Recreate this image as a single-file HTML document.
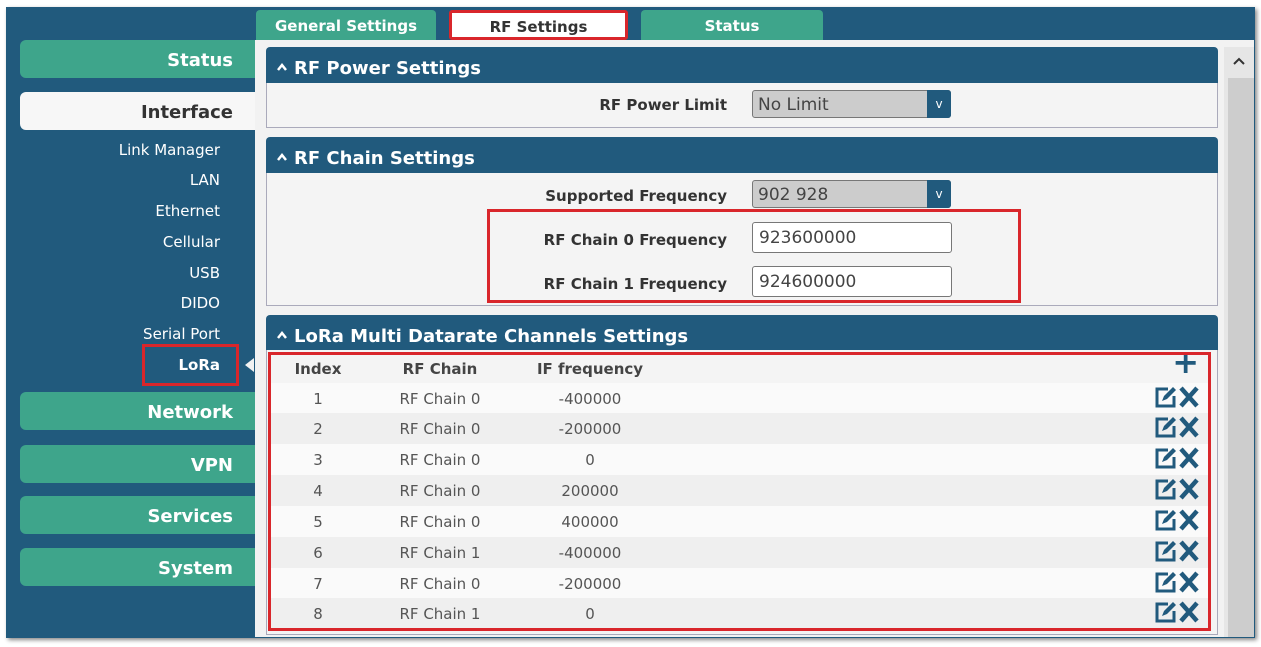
<!DOCTYPE html>
<html><head><style>
*{margin:0;padding:0;box-sizing:border-box}
body{width:1261px;height:647px;background:#fff;font-family:"DejaVu Sans","Liberation Sans",sans-serif;position:relative;overflow:hidden}
.a{position:absolute}
.frame{left:6px;top:7px;width:1249px;height:631px;background:#215a7d;box-shadow:2px 2px 4px #888}
.nav{left:20px;width:235px;height:38px;background:#3ea58b;border-radius:6px 0 0 6px;color:#fff;font-weight:bold;font-size:18px;text-align:right;padding-right:22px;line-height:42px}
.sub{right:1041px;color:#fff;font-size:15px;text-align:right}
.tab{top:10px;height:30px;background:#3ea58b;color:#fff;font-weight:bold;font-size:15px;text-align:center;line-height:33px;border-radius:4px 4px 0 0}
.content{left:255px;top:40px;width:999px;height:597px;background:#f2f2f2}
.ph{left:266px;width:952px;height:36px;background:#215a7d;color:#fff;font-weight:bold;font-size:18px;line-height:42px;padding-left:10px;border-radius:4px 4px 0 0}
.ph b{display:inline-block;width:12px;height:12px;vertical-align:1px;margin-right:6px}
.pb{left:266px;width:952px;background:#f4f4f4;border:1px solid #aab;border-top:none}
.lbl{font-weight:bold;font-size:15px;color:#333;text-align:right;width:300px;left:427px}
.sel{left:752px;width:199px;height:28px;border:1px solid #777;border-radius:3px;background:#ccc;font-size:17px;color:#444;padding-left:5px;line-height:28px}
.sel i{position:absolute;right:-1px;top:-1px;width:24px;height:28px;background:#215a7d;color:#fff;font-style:normal;font-size:12px;text-align:center;line-height:28px;border-radius:0 3px 3px 0}
.inp{left:752px;width:200px;height:31px;border:1px solid #777;border-radius:3px;background:#fff;font-size:17px;color:#444;padding-left:6px;line-height:31px}
.red{border:3px solid #d9262b}
.row{left:270px;width:938px;height:31px;font-size:15px;color:#555}
.row span{position:absolute;top:7px;text-align:center}
.c1{left:18px;width:60px}.c2{left:110px;width:120px}.c3{left:250px;width:140px}
.ic{position:absolute;right:8px;top:2px!important}
</style></head><body>
<div class="a frame"></div>
<div class="a content"></div>
<div class="a" style="left:1224px;top:47px;width:30px;height:590px;background:#e6e6e6"></div>
<div class="a" style="left:1228px;top:78px;width:26px;height:559px;background:#cdcdcd"></div>
<svg class="a" style="left:1232px;top:56px" width="14" height="10"><path d="M2 8l5-5 5 5" fill="none" stroke="#333" stroke-width="2"/></svg>

<div class="a nav" style="top:40px">Status</div>
<div class="a nav" style="top:92px;background:#f7f7f7;color:#333">Interface</div>
<div class="a sub" style="top:141px">Link Manager</div>
<div class="a sub" style="top:171px">LAN</div>
<div class="a sub" style="top:202px">Ethernet</div>
<div class="a sub" style="top:233px">Cellular</div>
<div class="a sub" style="top:264px">USB</div>
<div class="a sub" style="top:294px">DIDO</div>
<div class="a sub" style="top:325px">Serial Port</div>
<div class="a sub" style="top:356px;font-weight:bold;right:1041px">LoRa</div>
<div class="a red" style="left:142px;top:344px;width:97px;height:42px"></div>
<div class="a" style="left:245px;top:358px;width:0;height:0;border-top:7px solid transparent;border-bottom:7px solid transparent;border-right:9px solid #f2f2f2"></div>
<div class="a nav" style="top:392px">Network</div>
<div class="a nav" style="top:445px">VPN</div>
<div class="a nav" style="top:496px">Services</div>
<div class="a nav" style="top:548px">System</div>

<div class="a tab" style="left:256px;width:180px">General Settings</div>
<div class="a tab red" style="left:449px;width:179px;background:#fff;color:#333;top:10px;border-radius:3px;line-height:28px">RF Settings</div>
<div class="a tab" style="left:641px;width:182px">Status</div>

<div class="a ph" style="top:47px"><b><svg width="12" height="12"><path d="M2 9l4-5 4 5" fill="none" stroke="#fff" stroke-width="2.5"/></svg></b>RF Power Settings</div>
<div class="a pb" style="top:83px;height:45px"></div>
<div class="a lbl" style="top:96px">RF Power Limit</div>
<div class="a sel" style="top:90px">No Limit<i>v</i></div>

<div class="a ph" style="top:137px"><b><svg width="12" height="12"><path d="M2 9l4-5 4 5" fill="none" stroke="#fff" stroke-width="2.5"/></svg></b>RF Chain Settings</div>
<div class="a pb" style="top:173px;height:133px"></div>
<div class="a lbl" style="top:187px">Supported Frequency</div>
<div class="a sel" style="top:180px">902 928<i>v</i></div>
<div class="a lbl" style="top:231px">RF Chain 0 Frequency</div>
<div class="a inp" style="top:222px">923600000</div>
<div class="a lbl" style="top:275px">RF Chain 1 Frequency</div>
<div class="a inp" style="top:266px">924600000</div>
<div class="a red" style="left:487px;top:209px;width:534px;height:94px"></div>

<div class="a ph" style="top:315px"><b><svg width="12" height="12"><path d="M2 9l4-5 4 5" fill="none" stroke="#fff" stroke-width="2.5"/></svg></b>LoRa Multi Datarate Channels Settings</div>
<div class="a pb" style="top:350px;height:285px"></div>
<div class="a row" style="top:352px;font-weight:bold;color:#444"><span class="c1" style="top:8px">Index</span><span class="c2" style="top:8px">RF Chain</span><span class="c3" style="top:8px">IF frequency</span><span class="ic" style="font-size:32px;top:-6px!important;right:9px;color:#215a7d;font-weight:bold;line-height:32px">+</span></div>
<div class="a row" style="top:383px;background:#fafafa"><span class="c1">1</span><span class="c2">RF Chain 0</span><span class="c3">-400000</span><span class="ic"><svg width="46" height="24" viewBox="0 0 46 24"><path d="M14 4H3v17h17V11" fill="none" stroke="#215a7d" stroke-width="3"/><path d="M8 16l2-5 9-9 3 3-9 9z" fill="#215a7d"/><path d="M27 3l16 18M43 3L27 21" stroke="#215a7d" stroke-width="4.5"/></svg></span></div>
<div class="a row" style="top:413px;background:#efefef"><span class="c1">2</span><span class="c2">RF Chain 0</span><span class="c3">-200000</span><span class="ic"><svg width="46" height="24" viewBox="0 0 46 24"><path d="M14 4H3v17h17V11" fill="none" stroke="#215a7d" stroke-width="3"/><path d="M8 16l2-5 9-9 3 3-9 9z" fill="#215a7d"/><path d="M27 3l16 18M43 3L27 21" stroke="#215a7d" stroke-width="4.5"/></svg></span></div>
<div class="a row" style="top:444px;background:#fafafa"><span class="c1">3</span><span class="c2">RF Chain 0</span><span class="c3">0</span><span class="ic"><svg width="46" height="24" viewBox="0 0 46 24"><path d="M14 4H3v17h17V11" fill="none" stroke="#215a7d" stroke-width="3"/><path d="M8 16l2-5 9-9 3 3-9 9z" fill="#215a7d"/><path d="M27 3l16 18M43 3L27 21" stroke="#215a7d" stroke-width="4.5"/></svg></span></div>
<div class="a row" style="top:475px;background:#efefef"><span class="c1">4</span><span class="c2">RF Chain 0</span><span class="c3">200000</span><span class="ic"><svg width="46" height="24" viewBox="0 0 46 24"><path d="M14 4H3v17h17V11" fill="none" stroke="#215a7d" stroke-width="3"/><path d="M8 16l2-5 9-9 3 3-9 9z" fill="#215a7d"/><path d="M27 3l16 18M43 3L27 21" stroke="#215a7d" stroke-width="4.5"/></svg></span></div>
<div class="a row" style="top:506px;background:#fafafa"><span class="c1">5</span><span class="c2">RF Chain 0</span><span class="c3">400000</span><span class="ic"><svg width="46" height="24" viewBox="0 0 46 24"><path d="M14 4H3v17h17V11" fill="none" stroke="#215a7d" stroke-width="3"/><path d="M8 16l2-5 9-9 3 3-9 9z" fill="#215a7d"/><path d="M27 3l16 18M43 3L27 21" stroke="#215a7d" stroke-width="4.5"/></svg></span></div>
<div class="a row" style="top:537px;background:#efefef"><span class="c1">6</span><span class="c2">RF Chain 1</span><span class="c3">-400000</span><span class="ic"><svg width="46" height="24" viewBox="0 0 46 24"><path d="M14 4H3v17h17V11" fill="none" stroke="#215a7d" stroke-width="3"/><path d="M8 16l2-5 9-9 3 3-9 9z" fill="#215a7d"/><path d="M27 3l16 18M43 3L27 21" stroke="#215a7d" stroke-width="4.5"/></svg></span></div>
<div class="a row" style="top:568px;background:#fafafa"><span class="c1">7</span><span class="c2">RF Chain 0</span><span class="c3">-200000</span><span class="ic"><svg width="46" height="24" viewBox="0 0 46 24"><path d="M14 4H3v17h17V11" fill="none" stroke="#215a7d" stroke-width="3"/><path d="M8 16l2-5 9-9 3 3-9 9z" fill="#215a7d"/><path d="M27 3l16 18M43 3L27 21" stroke="#215a7d" stroke-width="4.5"/></svg></span></div>
<div class="a row" style="top:598px;background:#efefef"><span class="c1">8</span><span class="c2">RF Chain 1</span><span class="c3">0</span><span class="ic"><svg width="46" height="24" viewBox="0 0 46 24"><path d="M14 4H3v17h17V11" fill="none" stroke="#215a7d" stroke-width="3"/><path d="M8 16l2-5 9-9 3 3-9 9z" fill="#215a7d"/><path d="M27 3l16 18M43 3L27 21" stroke="#215a7d" stroke-width="4.5"/></svg></span></div>
<div class="a red" style="left:268px;top:352px;width:943px;height:279px"></div>
</body></html>
